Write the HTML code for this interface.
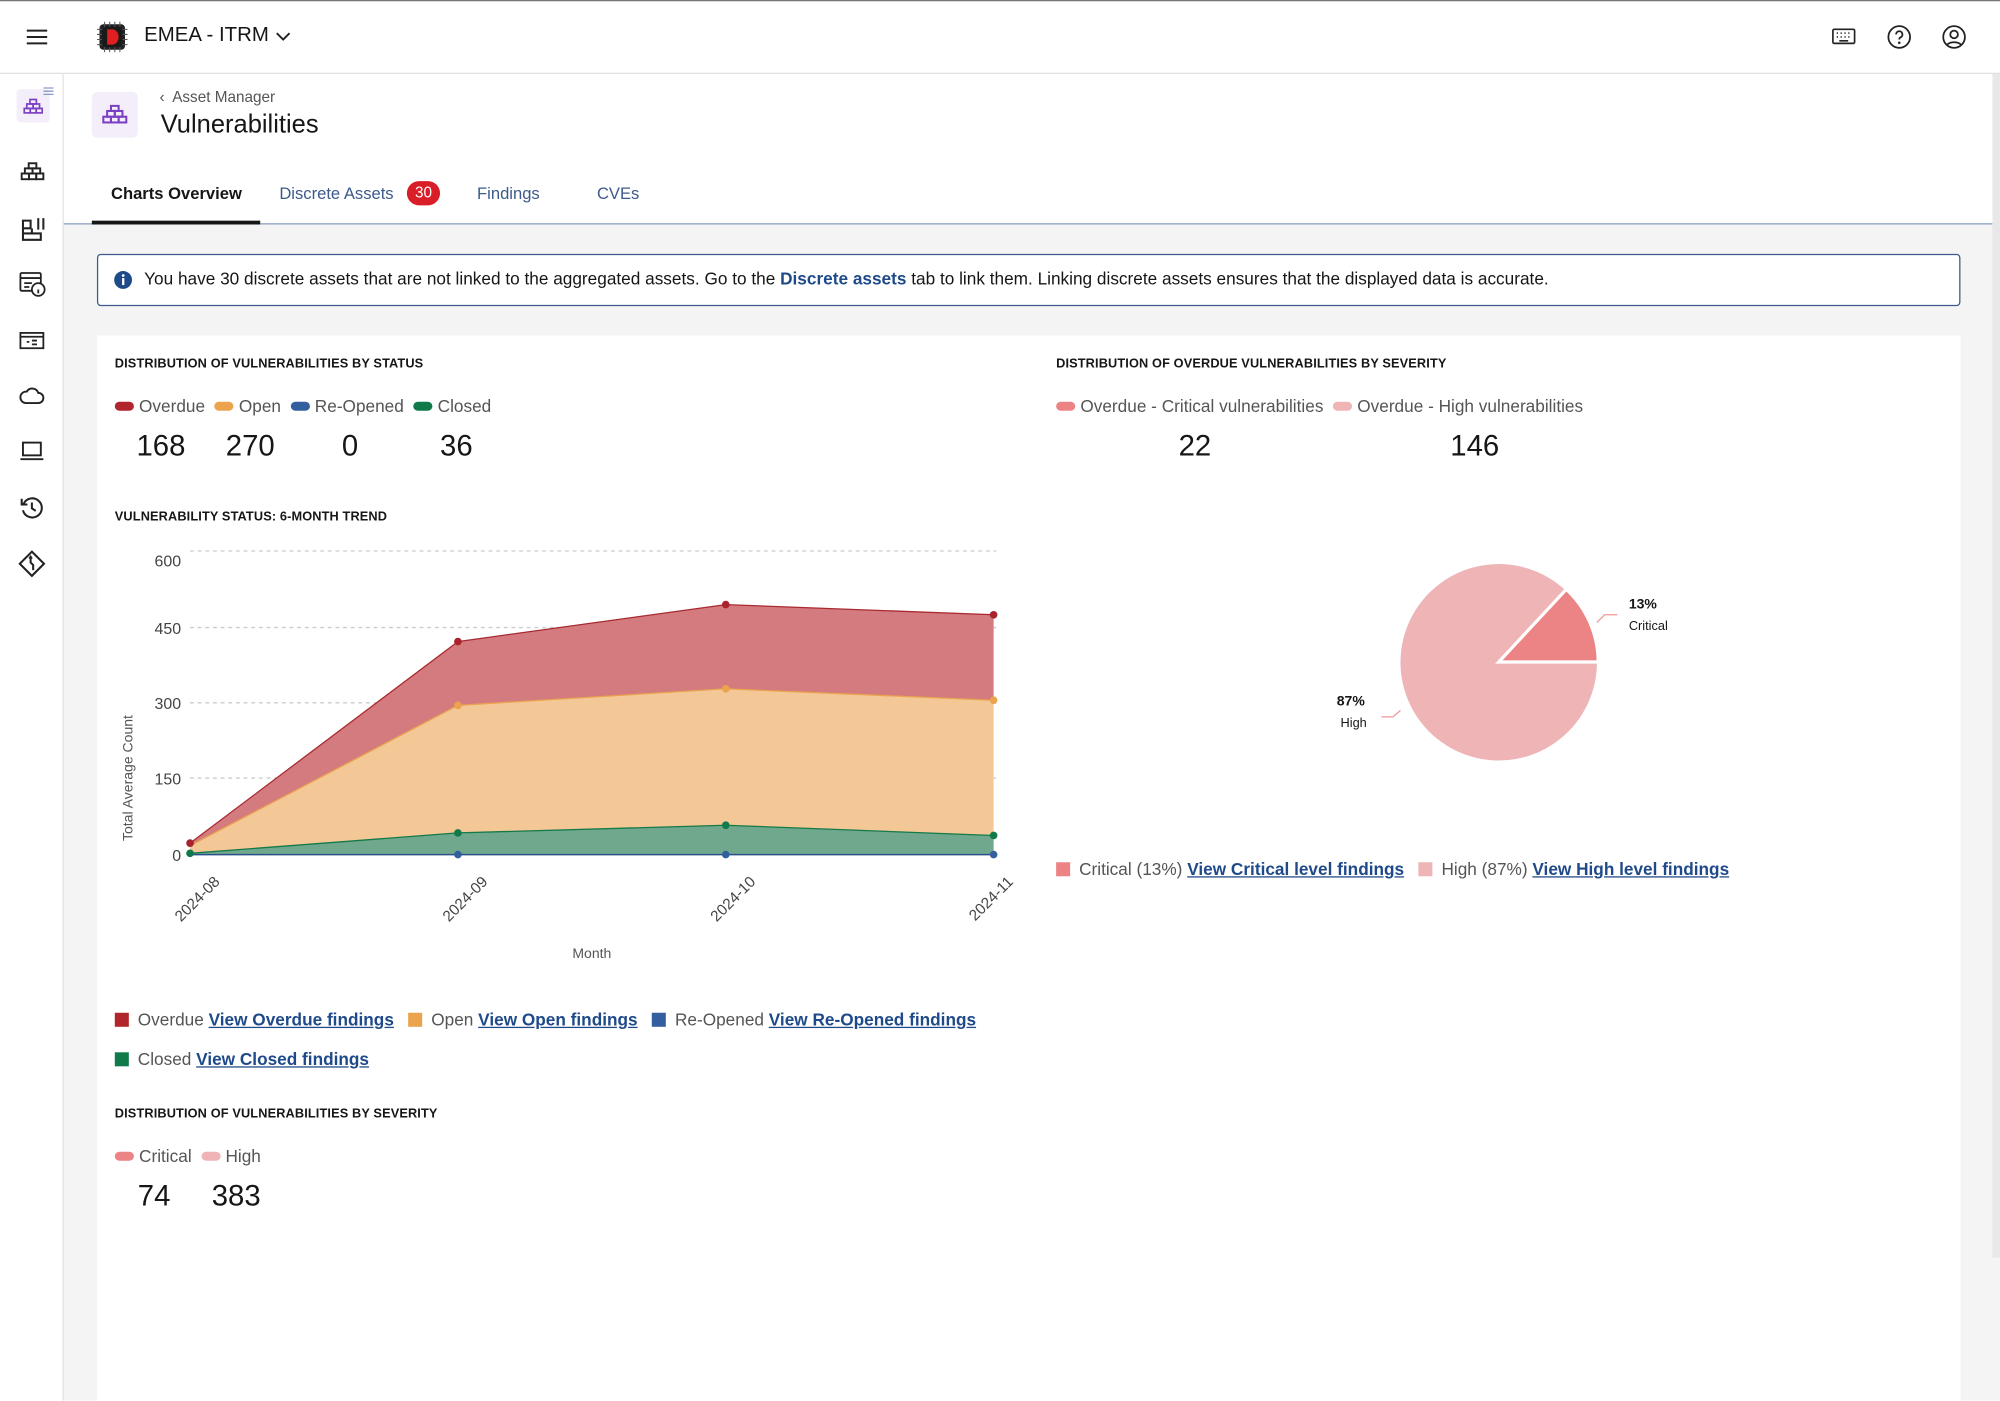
<!DOCTYPE html>
<html><head><meta charset="utf-8">
<style>
*{box-sizing:border-box;margin:0;padding:0}
html,body{width:2000px;height:1400px;overflow:hidden;background:#fff}
body{font-family:"Liberation Sans",sans-serif;color:#161616}
#w{position:absolute;left:0;top:0;width:1568px;height:1098px;transform:scale(1.27551);transform-origin:0 0;background:#f4f4f4;overflow:hidden}
.a{position:absolute;white-space:nowrap}
.lnk{color:#1f4a8a;font-weight:bold;text-decoration:underline}
.pill{display:inline-block;width:15px;height:7px;border-radius:4px;margin-right:4px;vertical-align:1px}
.sq{display:inline-block;width:11px;height:11px;margin-right:7px;vertical-align:-1px}
.t{font-size:10px;font-weight:bold;letter-spacing:.1px}
.lg{font-size:13.5px;color:#555}
.num{font-size:23px;color:#161616}
</style></head><body><div id="w">
<div class="a" style="left:0;top:0;width:1568px;height:58px;background:#fff;border-top:1px solid #777;border-bottom:1px solid #e0e0e0"></div>
<svg class="a" style="left:20px;top:22px" width="18" height="14"><path d="M1 2h16M1 7h16M1 12h16" stroke="#222" stroke-width="1.6"/></svg>
<svg class="a" style="left:76px;top:17px" width="24" height="24"><rect x="2" y="2" width="20" height="20" rx="3" fill="#222"/><path d="M0 6h24M0 10h24M0 14h24M0 18h24M6 0v24M10 0v24M14 0v24M18 0v24" stroke="#555" stroke-width=".8"/><rect x="4" y="4" width="16" height="16" rx="3" fill="#1a1a1a"/><path d="M8 6h4a5 6 0 0 1 0 12H8z" fill="#e02020"/></svg>
<div class="a" style="left:113px;top:19px;font-size:16px">EMEA - ITRM</div>
<svg class="a" style="left:216px;top:24px" width="12" height="10"><path d="M1 2l5 5 5-5" stroke="#222" stroke-width="1.5" fill="none"/></svg>
<svg class="a" style="left:1436px;top:21px" width="19" height="15"><rect x="1" y="2" width="17" height="11" rx="1" fill="none" stroke="#222" stroke-width="1.3"/><path d="M4 5h1M7 5h1M10 5h1M13 5h1M4 8h1M7 8h1M10 8h1M13 8h1M6 11h7" stroke="#222" stroke-width="1.2"/></svg>
<svg class="a" style="left:1479px;top:19px" width="20" height="20"><circle cx="10" cy="10" r="8.5" fill="none" stroke="#222" stroke-width="1.4"/><path d="M7.5 8a2.5 2.5 0 1 1 3.5 2.3c-.8.4-1 .9-1 1.7" fill="none" stroke="#222" stroke-width="1.4"/><circle cx="10" cy="14.5" r="1" fill="#222"/></svg>
<svg class="a" style="left:1522px;top:19px" width="20" height="20"><circle cx="10" cy="10" r="8.5" fill="none" stroke="#222" stroke-width="1.4"/><circle cx="10" cy="8" r="3" fill="none" stroke="#222" stroke-width="1.4"/><path d="M4.5 16a7 5 0 0 1 11 0" fill="none" stroke="#222" stroke-width="1.4"/></svg>
<div class="a" style="left:1562px;top:58px;width:6px;height:928px;background:#e8e8e8"></div>
<div class="a" style="left:0;top:58px;width:50px;height:1040px;background:#fff;border-right:1px solid #e0e0e0"></div>
<div class="a" style="left:13px;top:70px;width:26px;height:26px;background:#f3eefa;border-radius:3px"></div>
<svg class="a" style="left:34px;top:68px" width="8" height="7"><path d="M0 1h8M0 3.5h8M0 6h8" stroke="#8a9ac0" stroke-width="1"/></svg>
<svg class="a" style="left:18px;top:77px" width="16" height="13"><g fill="none" stroke="#7b3fc4" stroke-width="1.3"><rect x="5.5" y="1" width="5" height="3.5"/><rect x="3" y="4.5" width="5" height="3.5"/><rect x="8" y="4.5" width="5" height="3.5"/><rect x="1" y="8" width="4.7" height="3.5"/><rect x="5.7" y="8" width="4.7" height="3.5"/><rect x="10.4" y="8" width="4.7" height="3.5"/></g></svg>
<svg class="a" style="left:16px;top:127px" width="19" height="16"><g fill="none" stroke="#222" stroke-width="1.5"><rect x="6.5" y="1" width="6" height="4"/><rect x="3.5" y="5" width="6" height="4"/><rect x="9.5" y="5" width="6" height="4"/><rect x="1" y="9" width="5.7" height="4.5"/><rect x="6.7" y="9" width="5.7" height="4.5"/><rect x="12.4" y="9" width="5.6" height="4.5"/></g></svg>
<svg class="a" style="left:16px;top:170px" width="20" height="20"><g fill="none" stroke="#222" stroke-width="1.6"><path d="M2 3h6v6H2zM2 9v9h14v-5H9V9M9 13H2M14 1v9M18 1v9"/></g></svg>
<svg class="a" style="left:15px;top:212px" width="22" height="22"><g fill="none" stroke="#222" stroke-width="1.4"><rect x="1" y="2" width="16" height="14" rx="1"/><path d="M1 6h16M4 10h6M4 13h4"/><circle cx="15" cy="15" r="5" fill="#fff"/><path d="M15 13v0M15 15v3"/></g></svg>
<svg class="a" style="left:15px;top:260px" width="20" height="15"><g fill="none" stroke="#222" stroke-width="1.4"><rect x="1" y="1" width="18" height="12"/><path d="M1 4h18M6 8h2M10 7h4M10 10h4"/></g></svg>
<svg class="a" style="left:15px;top:303px" width="20" height="15"><path d="M5 13h10a4 4 0 0 0 0-8 5 5 0 0 0-9-1 4.5 4.5 0 0 0-1 9z" fill="none" stroke="#222" stroke-width="1.5"/></svg>
<svg class="a" style="left:15px;top:345px" width="20" height="17"><g fill="none" stroke="#222" stroke-width="1.5"><rect x="3" y="2" width="14" height="10"/><path d="M1 15h18"/></g></svg>
<svg class="a" style="left:15px;top:388px" width="20" height="20"><g fill="none" stroke="#222" stroke-width="1.6"><path d="M3.5 7A7.5 7.5 0 1 1 3 12M2 3v4.5h4.5M10 6v4.5l3 2"/></g></svg>
<svg class="a" style="left:14px;top:431px" width="22" height="22"><g fill="none" stroke="#222" stroke-width="1.6"><path d="M11 1.5l9.5 9.5-9.5 9.5-9.5-9.5z"/><path d="M10 6v4l2 2v4M9 7l1-1.5 1 1.5"/></g></svg>
<div class="a" style="left:50px;top:58px;width:1512px;height:118px;background:#fff;border-bottom:1.5px solid #8aa0c0"></div>
<div class="a" style="left:72px;top:72px;width:36px;height:36px;background:#f3eefa;border-radius:4px"></div>
<svg class="a" style="left:80px;top:82px" width="20" height="16"><g fill="none" stroke="#7b3fc4" stroke-width="1.6"><rect x="7" y="1" width="6" height="4"/><rect x="4" y="5" width="6" height="4.5"/><rect x="10" y="5" width="6" height="4.5"/><rect x="1" y="9.5" width="6" height="4.5"/><rect x="7" y="9.5" width="6" height="4.5"/><rect x="13" y="9.5" width="6" height="4.5"/></g></svg>
<div class="a" style="left:125px;top:69px;font-size:12px;color:#555">‹&nbsp; Asset Manager</div>
<div class="a" style="left:126px;top:87px;font-size:20px;font-weight:500">Vulnerabilities</div>
<div class="a" style="left:87px;top:144px;font-size:13px;font-weight:bold;color:#161616">Charts Overview</div>
<div class="a" style="left:72px;top:173px;width:132px;height:3px;background:#161616"></div>
<div class="a" style="left:219px;top:144px;font-size:13px;color:#3d5a8a">Discrete Assets</div>
<div class="a" style="left:319px;top:142px;width:26px;height:19px;border-radius:10px;background:#da1e28;color:#fff;font-size:12px;text-align:center;line-height:19px">30</div>
<div class="a" style="left:374px;top:144px;font-size:13px;color:#3d5a8a">Findings</div>
<div class="a" style="left:468px;top:144px;font-size:13px;color:#3d5a8a">CVEs</div>
<div class="a" style="left:76px;top:199px;width:1461px;height:41px;background:#fff;border:1px solid #3d5a8a;border-radius:3px"></div>
<svg class="a" style="left:89px;top:212px" width="15" height="15"><circle cx="7.5" cy="7.5" r="7" fill="#1f4a8a"/><rect x="6.7" y="6" width="1.8" height="5.5" fill="#fff"/><circle cx="7.6" cy="4" r="1.1" fill="#fff"/></svg>
<div class="a" style="left:113px;top:211px;font-size:13.5px;color:#161616">You have 30 discrete assets that are not linked to the aggregated assets. Go to the <b style="color:#1f4a8a">Discrete assets</b> tab to link them. Linking discrete assets ensures that the displayed data is accurate.</div>
<div class="a" style="left:76px;top:263px;width:1461px;height:860px;background:#fff"></div>
<div class="a t" style="left:90px;top:280px">DISTRIBUTION OF VULNERABILITIES BY STATUS</div>
<div class="a lg" style="left:90px;top:311px"><span class="pill" style="background:#b1252c"></span>Overdue&nbsp;&nbsp;<span class="pill" style="background:#eba34d"></span>Open&nbsp;&nbsp;<span class="pill" style="background:#345f9e"></span>Re-Opened&nbsp;&nbsp;<span class="pill" style="background:#117a4a"></span>Closed</div>
<div class="a num" style="left:107px;top:336px">168</div>
<div class="a num" style="left:177px;top:336px">270</div>
<div class="a num" style="left:268px;top:336px">0</div>
<div class="a num" style="left:345px;top:336px">36</div>
<div class="a t" style="left:90px;top:400px">VULNERABILITY STATUS: 6-MONTH TREND</div>
<svg class="a" style="left:0;top:0" width="1568" height="1098">
<g stroke="#ccc" stroke-dasharray="3,3" stroke-width="1"><path d="M149 432H781M149 492H781M149 551H781M149 610H781"/></g>
<g font-family="Liberation Sans" font-size="12.5" fill="#444" text-anchor="end"><text x="142" y="444">600</text><text x="142" y="497">450</text><text x="142" y="556">300</text><text x="142" y="615">150</text><text x="142" y="675">0</text></g>
<path d="M149 661L359 503L569 474L779 482L779 549L569 540L359 553L149 663Z" fill="#d47b7f"/>
<path d="M149 663L359 553L569 540L779 549L779 655L569 647L359 653L149 669Z" fill="#f3c796"/>
<path d="M149 669L359 653L569 647L779 655L779 670L149 670Z" fill="#6fa88d"/>
<path d="M149 661L359 503L569 474L779 482" fill="none" stroke="#a82a30" stroke-width="1"/>
<path d="M149 663L359 553L569 540L779 549" fill="none" stroke="#e9a24f" stroke-width="1"/>
<path d="M149 669L359 653L569 647L779 655" fill="none" stroke="#137a4a" stroke-width="1"/>
<path d="M149 670H779" stroke="#2a4f8a" stroke-width="1.2"/>
<g fill="#a8232b"><circle cx="149" cy="661" r="3"/><circle cx="359" cy="503" r="3"/><circle cx="569" cy="474" r="3"/><circle cx="779" cy="482" r="3"/></g>
<g fill="#eba34d"><circle cx="359" cy="553" r="3"/><circle cx="569" cy="540" r="3"/><circle cx="779" cy="549" r="3"/></g>
<g fill="#117a4a"><circle cx="149" cy="669" r="3"/><circle cx="359" cy="653" r="3"/><circle cx="569" cy="647" r="3"/><circle cx="779" cy="655" r="3"/></g>
<g fill="#345f9e"><circle cx="359" cy="670" r="3"/><circle cx="569" cy="670" r="3"/><circle cx="779" cy="670" r="3"/></g>
<g font-family="Liberation Sans" font-size="12" fill="#444" text-anchor="end"><text transform="translate(173,692) rotate(-45)">2024-08</text><text transform="translate(383,692) rotate(-45)">2024-09</text><text transform="translate(593,692) rotate(-45)">2024-10</text><text transform="translate(795,692) rotate(-45)">2024-11</text></g>
<text x="464" y="751" font-family="Liberation Sans" font-size="11" fill="#555" text-anchor="middle">Month</text>
<text transform="translate(104,610) rotate(-90)" font-family="Liberation Sans" font-size="11" fill="#555" text-anchor="middle">Total Average Count</text>
<path d="M1175 519L1253 519A78 78 0 1 1 1228 462Z" fill="#efb4b5" stroke="#fff" stroke-width="2"/>
<path d="M1175 519L1253 519A78 78 0 0 0 1228 462Z" fill="#ec8485" stroke="#fff" stroke-width="2.5"/>
<path d="M1252 488l6-6h10M1098 557l-6 5h-9" fill="none" stroke="#e99" stroke-width="1"/>
<g font-family="Liberation Sans" fill="#161616"><text x="1277" y="477" font-size="11" font-weight="bold">13%</text><text x="1277" y="494" font-size="10">Critical</text><text x="1048" y="553" font-size="11" font-weight="bold">87%</text><text x="1051" y="570" font-size="10">High</text></g>
</svg>
<div class="a lg" style="left:90px;top:792px"><span class="sq" style="background:#b1252c"></span>Overdue <span class="lnk">View Overdue findings</span>&nbsp;&nbsp;&nbsp;<span class="sq" style="background:#eba34d"></span>Open <span class="lnk">View Open findings</span>&nbsp;&nbsp;&nbsp;<span class="sq" style="background:#345f9e"></span>Re-Opened <span class="lnk">View Re-Opened findings</span></div>
<div class="a lg" style="left:90px;top:823px"><span class="sq" style="background:#117a4a"></span>Closed <span class="lnk">View Closed findings</span></div>
<div class="a t" style="left:90px;top:868px">DISTRIBUTION OF VULNERABILITIES BY SEVERITY</div>
<div class="a lg" style="left:90px;top:899px"><span class="pill" style="background:#ec8485"></span>Critical&nbsp;&nbsp;<span class="pill" style="background:#efb4b5"></span>High</div>
<div class="a num" style="left:108px;top:924px">74</div>
<div class="a num" style="left:166px;top:924px">383</div>
<div class="a t" style="left:828px;top:280px">DISTRIBUTION OF OVERDUE VULNERABILITIES BY SEVERITY</div>
<div class="a lg" style="left:828px;top:311px"><span class="pill" style="background:#ec8485"></span>Overdue - Critical vulnerabilities&nbsp;&nbsp;<span class="pill" style="background:#efb4b5"></span>Overdue - High vulnerabilities</div>
<div class="a num" style="left:924px;top:336px">22</div>
<div class="a num" style="left:1137px;top:336px">146</div>
<div class="a lg" style="left:828px;top:674px"><span class="sq" style="background:#ec8485"></span>Critical (13%) <span class="lnk">View Critical level findings</span>&nbsp;&nbsp;&nbsp;<span class="sq" style="background:#efb4b5"></span>High (87%) <span class="lnk">View High level findings</span></div>
</div></body></html>
